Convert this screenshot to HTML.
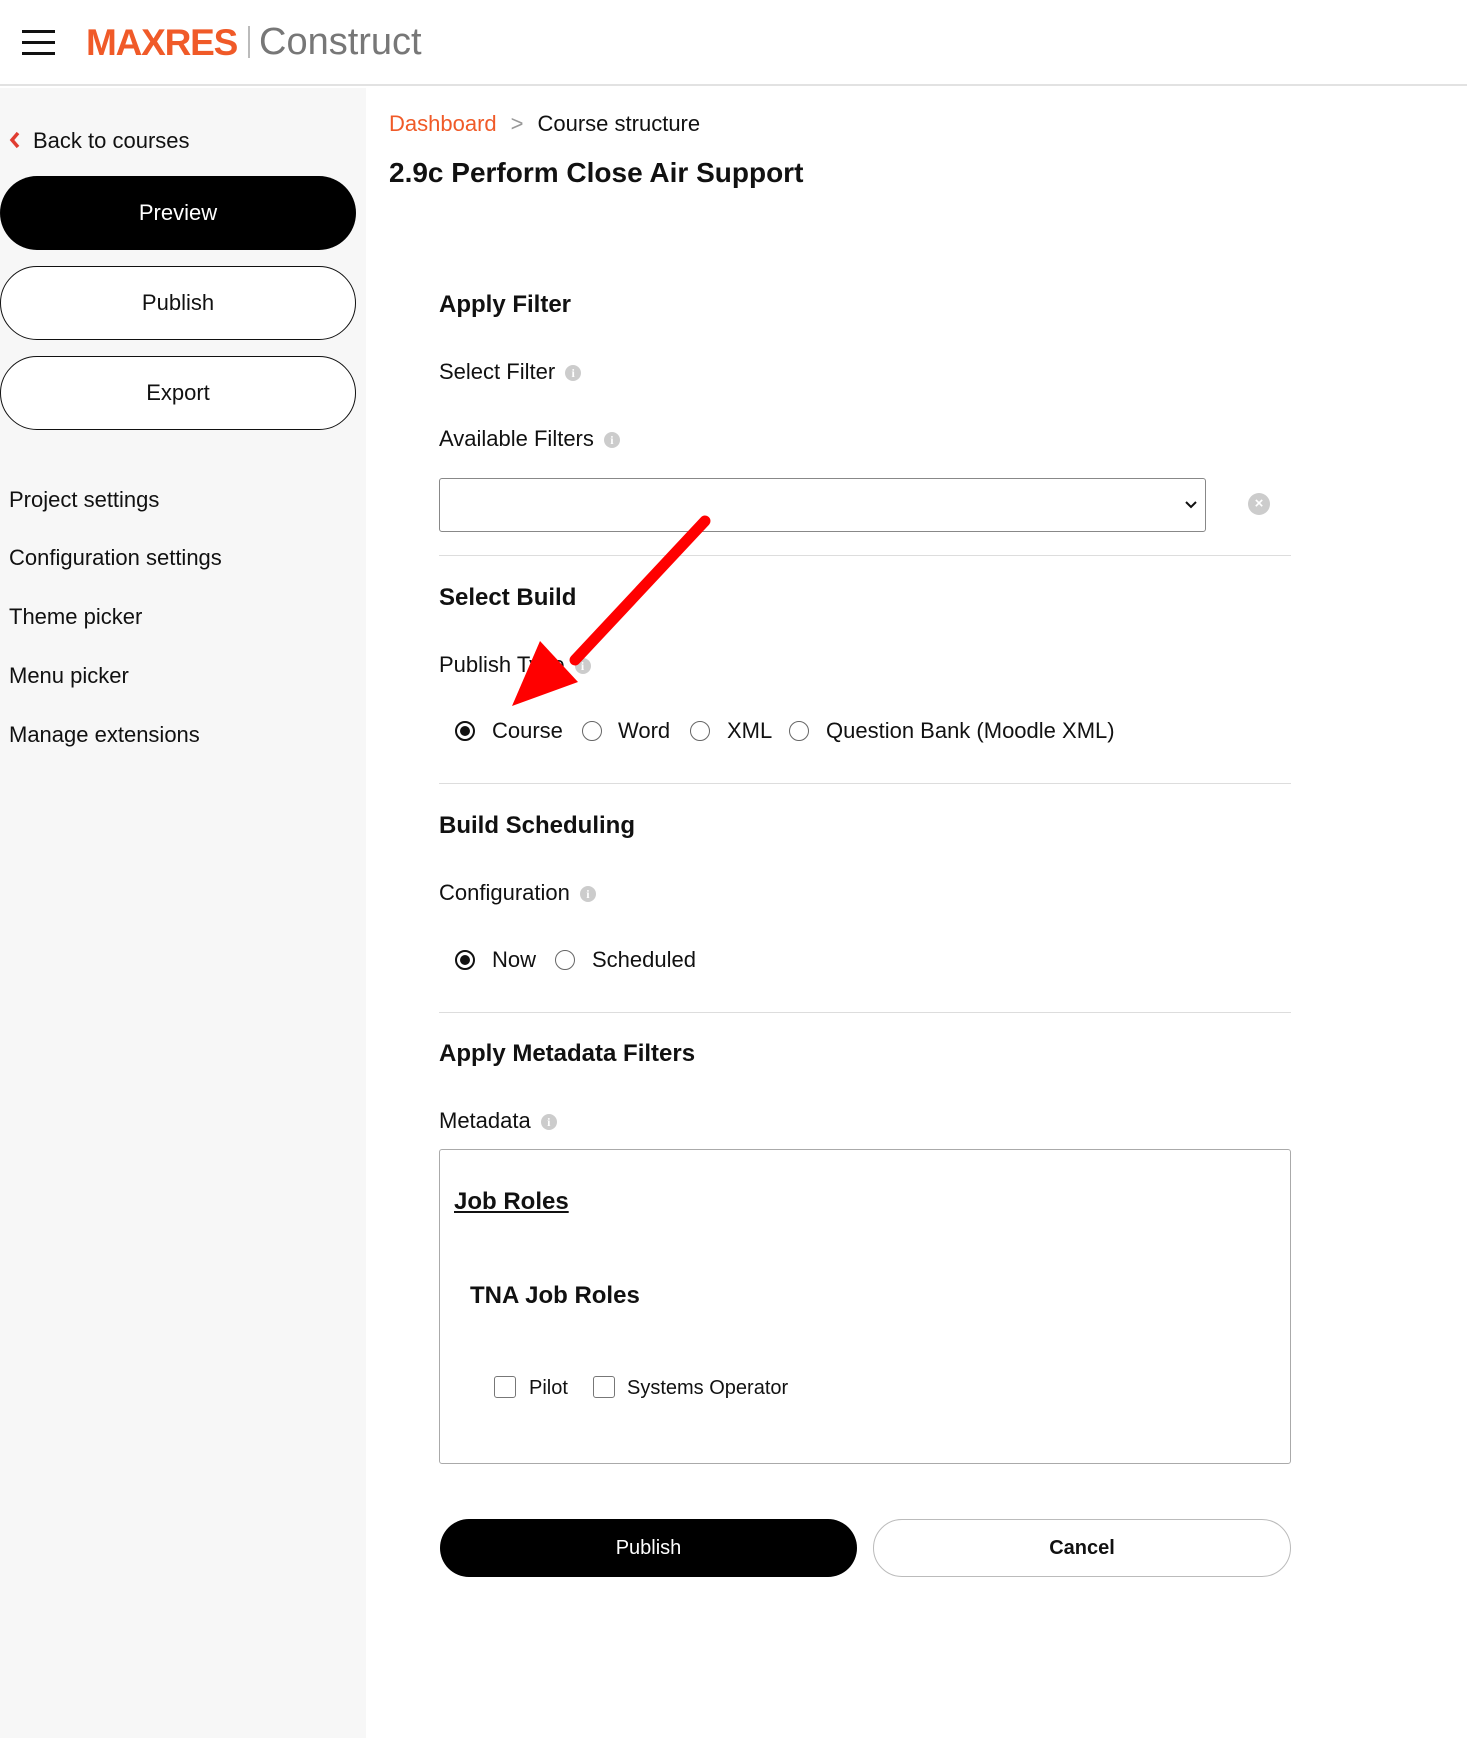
<!DOCTYPE html>
<html><head><meta charset="utf-8"><style>
*{box-sizing:border-box;margin:0;padding:0}
body{width:1467px;height:1738px;position:relative;background:#fff;font-family:"Liberation Sans","DejaVu Sans",sans-serif;color:#111;overflow:hidden}
.a{position:absolute;white-space:nowrap;line-height:1}
.t{font-size:22px}
.h{font-size:24px;font-weight:bold}
.btn{position:absolute;border-radius:40px;display:flex;align-items:center;justify-content:center;font-size:22px}
.hr{position:absolute;left:439px;width:852px;height:1px;background:#ddd}
.i{display:inline-block;width:16px;height:16px;border-radius:50%;background:#ccc;color:#fff;font-size:12px;font-weight:bold;text-align:center;line-height:16px;vertical-align:middle;margin-left:10px;font-family:"Liberation Serif",serif}
.r{position:absolute;width:20px;height:20px;border:1.5px solid #666;border-radius:50%;background:#fff}
.r.on{border:2px solid #111}
.r.on::after{content:"";position:absolute;left:3px;top:3px;width:10px;height:10px;border-radius:50%;background:#111}
.cb{position:absolute;width:22px;height:22px;border:1.5px solid #777;border-radius:3px}
</style></head><body>
<div style="position:absolute;left:0;top:0;width:1467px;height:86px;border-bottom:2px solid #e2e2e2"></div>
<div style="position:absolute;left:22px;top:30px;width:33px;height:3px;background:#111;box-shadow:0 11px 0 #111,0 22px 0 #111"></div>
<div class="a" style="left:86px;top:24px;font-size:37px;font-weight:bold;color:#f05a28;letter-spacing:-1.2px">MAXRES</div>
<div style="position:absolute;left:248px;top:26px;width:2px;height:32px;background:#bbb"></div>
<div class="a" style="left:259px;top:23px;font-size:38px;color:#777">Construct</div>
<div style="position:absolute;left:0;top:88px;width:366px;height:1650px;background:#f7f7f7"></div>
<svg style="position:absolute;left:8px;top:131px" width="14" height="18"><path d="M10 2L4 9l6 7" stroke="#e03c31" stroke-width="3.5" fill="none"/></svg>
<div class="a t" style="left:33px;top:130px">Back to courses</div>
<div class="btn" style="left:0;top:176px;width:356px;height:74px;background:#000;color:#fff">Preview</div>
<div class="btn" style="left:0;top:266px;width:356px;height:74px;border:1.5px solid #111;background:#fff">Publish</div>
<div class="btn" style="left:0;top:356px;width:356px;height:74px;border:1.5px solid #111;background:#fff">Export</div>
<div class="a t" style="left:9px;top:489px">Project settings</div>
<div class="a t" style="left:9px;top:547px">Configuration settings</div>
<div class="a t" style="left:9px;top:606px">Theme picker</div>
<div class="a t" style="left:9px;top:665px">Menu picker</div>
<div class="a t" style="left:9px;top:724px">Manage extensions</div>
<div class="a t" style="left:389px;top:113px"><span style="color:#f05a28">Dashboard</span><span style="color:#999;margin:0 14px">&gt;</span>Course structure</div>
<div class="a" style="left:389px;top:159px;font-size:28px;font-weight:bold">2.9c Perform Close Air Support</div>
<div class="a h" style="left:439px;top:293px">Apply Filter</div>
<div class="a t" style="left:439px;top:361px">Select Filter<span class="i">i</span></div>
<div class="a t" style="left:439px;top:428px">Available Filters<span class="i">i</span></div>
<div style="position:absolute;left:439px;top:478px;width:767px;height:54px;border:1.5px solid #888;border-radius:3px"></div>
<svg style="position:absolute;left:1184px;top:498px" width="14" height="14"><path d="M2 4l5 5 5-5" stroke="#111" stroke-width="2" fill="none"/></svg>
<div style="position:absolute;left:1248px;top:493px;width:22px;height:22px;border-radius:50%;background:#ccc;color:#fff;font-size:15px;font-weight:bold;text-align:center;line-height:22px">×</div>
<div class="hr" style="top:555px"></div>
<div class="a h" style="left:439px;top:586px">Select Build</div>
<div class="a t" style="left:439px;top:654px">Publish Type<span class="i">i</span></div>
<div class="r on" style="left:455px;top:721px"></div><div class="a t" style="left:492px;top:720px">Course</div>
<div class="r" style="left:582px;top:721px"></div><div class="a t" style="left:618px;top:720px">Word</div>
<div class="r" style="left:690px;top:721px"></div><div class="a t" style="left:727px;top:720px">XML</div>
<div class="r" style="left:789px;top:721px"></div><div class="a t" style="left:826px;top:720px">Question Bank (Moodle XML)</div>
<div class="hr" style="top:783px"></div>
<div class="a h" style="left:439px;top:814px">Build Scheduling</div>
<div class="a t" style="left:439px;top:882px">Configuration<span class="i">i</span></div>
<div class="r on" style="left:455px;top:950px"></div><div class="a t" style="left:492px;top:949px">Now</div>
<div class="r" style="left:555px;top:950px"></div><div class="a t" style="left:592px;top:949px">Scheduled</div>
<div class="hr" style="top:1012px"></div>
<div class="a h" style="left:439px;top:1042px">Apply Metadata Filters</div>
<div class="a t" style="left:439px;top:1110px">Metadata<span class="i">i</span></div>
<div style="position:absolute;left:439px;top:1149px;width:852px;height:315px;border:1.5px solid #aaa;border-radius:3px"></div>
<div class="a h" style="left:454px;top:1190px;text-decoration:underline">Job Roles</div>
<div class="a h" style="left:470px;top:1284px">TNA Job Roles</div>
<div class="cb" style="left:494px;top:1376px"></div><div class="a" style="left:529px;top:1378px;font-size:20px">Pilot</div>
<div class="cb" style="left:593px;top:1376px"></div><div class="a" style="left:627px;top:1378px;font-size:20px">Systems Operator</div>
<div class="btn" style="left:440px;top:1519px;width:417px;height:58px;background:#000;color:#fff;font-size:20px">Publish</div>
<div class="btn" style="left:873px;top:1519px;width:418px;height:58px;border:1.5px solid #bbb;font-size:20px;font-weight:bold">Cancel</div>
<svg style="position:absolute;left:0;top:0" width="1467" height="1738">
<line x1="705" y1="521" x2="575" y2="660" stroke="#f00" stroke-width="11" stroke-linecap="round"/>
<polygon points="512,706 540,641 578,682" fill="#f00"/>
</svg>
</body></html>
